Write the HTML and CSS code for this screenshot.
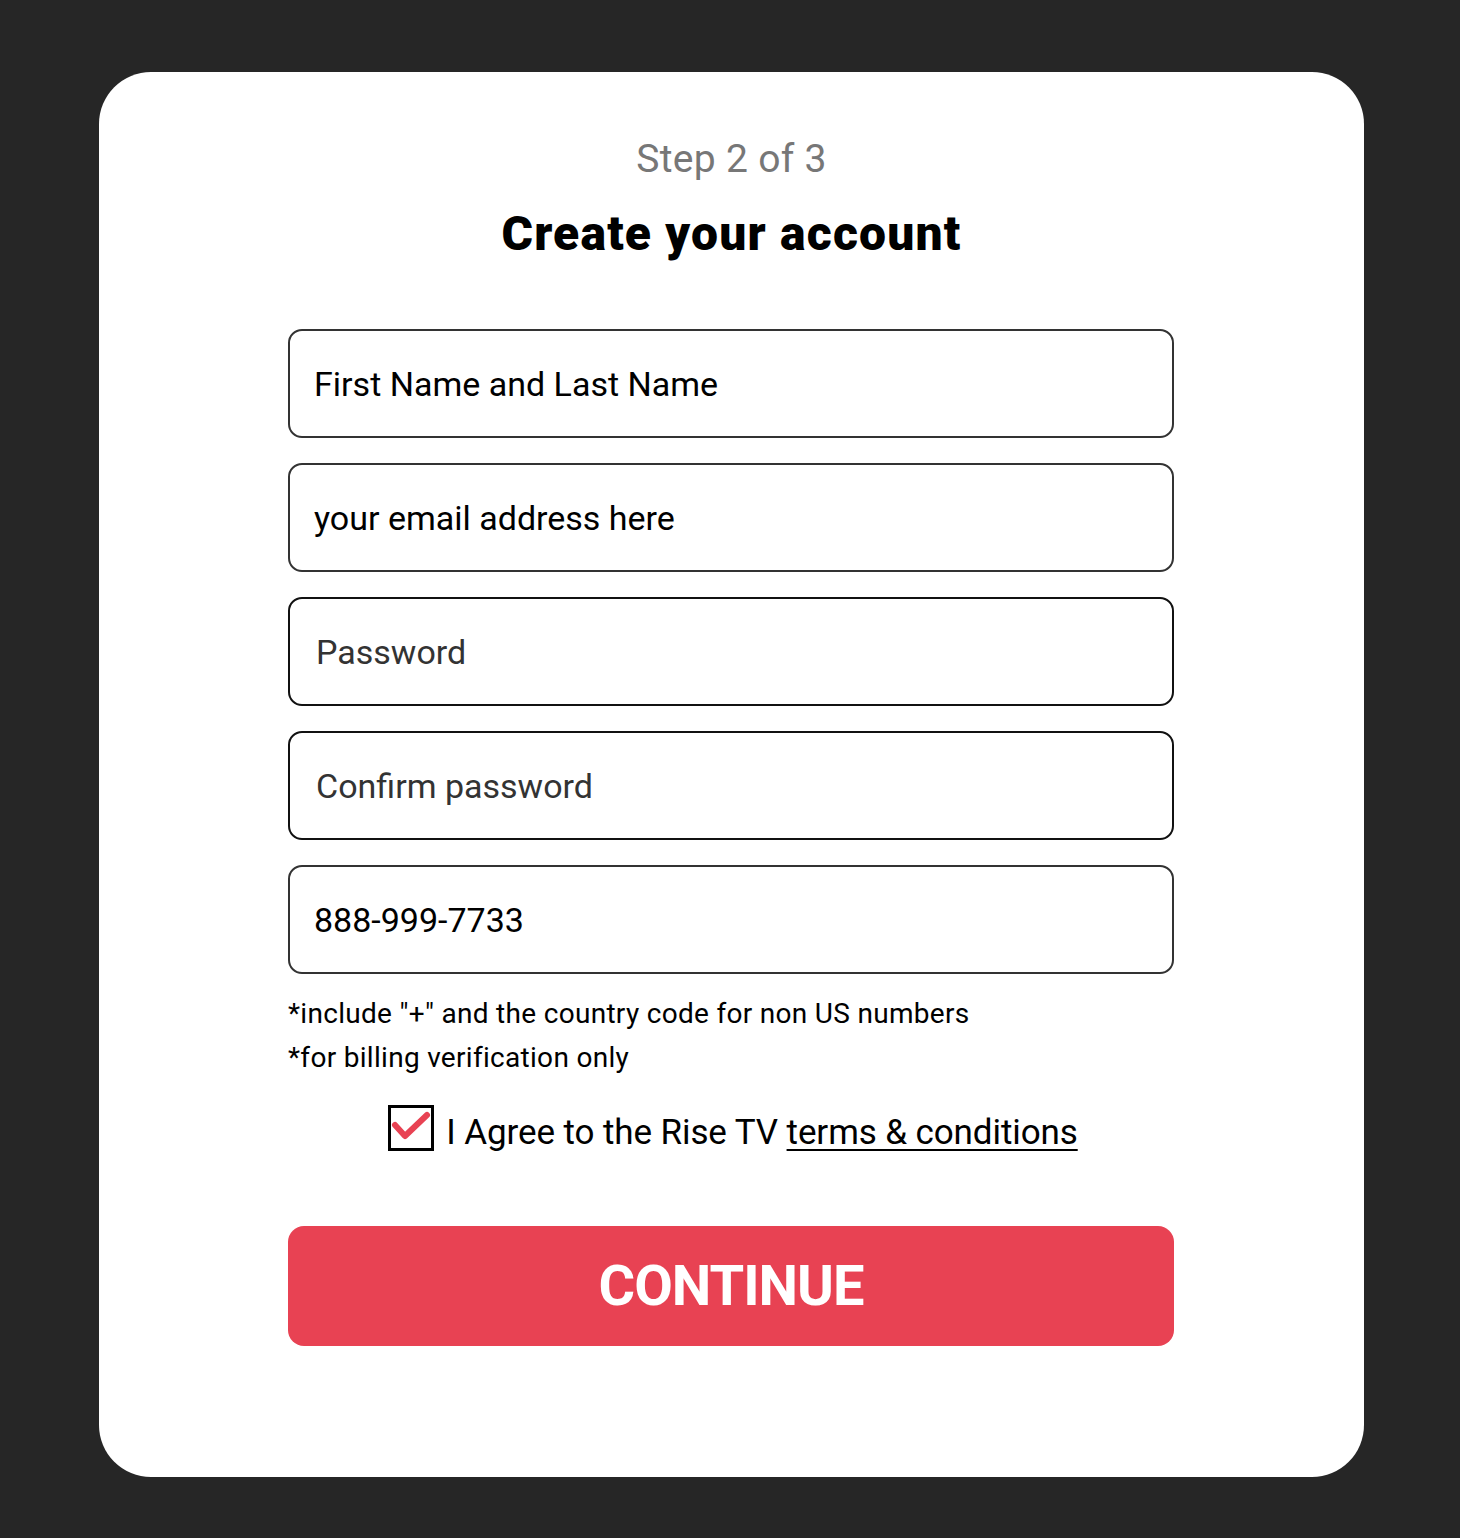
FILE: index.html
```html
<!DOCTYPE html>
<html lang="en">
<head>
    <meta charset="UTF-8">
    <meta name="viewport" content="width=device-width, initial-scale=1.0">
    <title>Create your account</title>
    <link rel="stylesheet" href="styles.css">
</head>
<body>
    <div class="card">
        <p class="step">Step 2 of 3</p>
        <h1 class="title">Create your account</h1>

        <form class="signup">
            <input class="field" type="text" value="First Name and Last Name">
            <input class="field" type="email" value="your email address here">
            <input class="field field-pass" type="password" placeholder="Password">
            <input class="field field-pass" type="password" placeholder="Confirm password">
            <input class="field" type="tel" value="888-999-7733">

            <div class="hint">
                <p>*include "+" and the country code for non US numbers</p>
                <p>*for billing verification only</p>
            </div>

            <label class="agree">
                <svg class="check" width="46" height="46" viewBox="0 0 46 46">
                    <rect x="1.5" y="1.5" width="43" height="43" fill="#fff" stroke="#000" stroke-width="3"/>
                    <polyline points="7,20 17,31 39,10" fill="none" stroke="#e84253" stroke-width="6" stroke-linecap="round" stroke-linejoin="round"/>
                </svg>
                <span class="agree-text">I Agree to the Rise TV <a href="#">terms &amp; conditions</a></span>
            </label>

            <button class="button" type="button">CONTINUE</button>
        </form>
    </div>
</body>
</html>
```

FILE: styles.css
```css
body {
    margin: 0;
    background-color: #262626;
    font-family: Roboto, "Liberation Sans", sans-serif;
    padding: 72px 0 61px 99px;
}

.card {
    box-sizing: border-box;
    width: 1265px;
    height: 1405px;
    background-color: #fff;
    border-radius: 52px;
    padding-top: 65px;
}

.step {
    margin: 0;
    text-align: center;
    font-size: 39px;
    line-height: 44px;
    letter-spacing: 0.3px;
    color: #777;
}

.title {
    margin: 25px 0 0;
    text-align: center;
    font-size: 48px;
    line-height: 56px;
    font-weight: 900;
    letter-spacing: 1.2px;
    color: #000;
}

.signup {
    width: 886px;
    margin: 67px 0 0 189px;
    display: flex;
    flex-direction: column;
}

.field {
    box-sizing: border-box;
    height: 109px;
    margin-bottom: 25px;
    padding: 0 24px;
    border: 2px solid #333;
    border-radius: 14px;
    font-family: Roboto, "Liberation Sans", sans-serif;
    font-size: 34px;
    color: #000;
    outline: none;
}

.field-pass {
    border-color: #111;
    padding-left: 26px;
}

.field-pass::placeholder {
    color: #333;
    opacity: 1;
}

.signup .field:nth-of-type(5) {
    margin-bottom: 18px;
}

.hint p {
    margin: 0;
    font-size: 28px;
    line-height: 44px;
    letter-spacing: 0.3px;
    color: #000;
}

.agree {
    display: flex;
    align-items: center;
    justify-content: center;
    gap: 12px;
    margin-top: 20px;
    padding-left: 4px;
    cursor: pointer;
}

.check {
    display: block;
}

.agree-text {
    font-size: 35px;
    line-height: 46px;
    margin-top: 10px;
    letter-spacing: -0.1px;
    color: #000;
}

.agree-text a {
    color: #000;
    text-decoration: underline;
    text-underline-offset: 5px;
    text-decoration-thickness: 2px;
}

.button {
    margin-top: 70px;
    height: 120px;
    border: none;
    border-radius: 16px;
    background-color: #e84253;
    color: #fff;
    font-family: Roboto, "Liberation Sans", sans-serif;
    font-size: 56px;
    font-weight: 700;
    letter-spacing: -1px;
    cursor: pointer;
}
```
